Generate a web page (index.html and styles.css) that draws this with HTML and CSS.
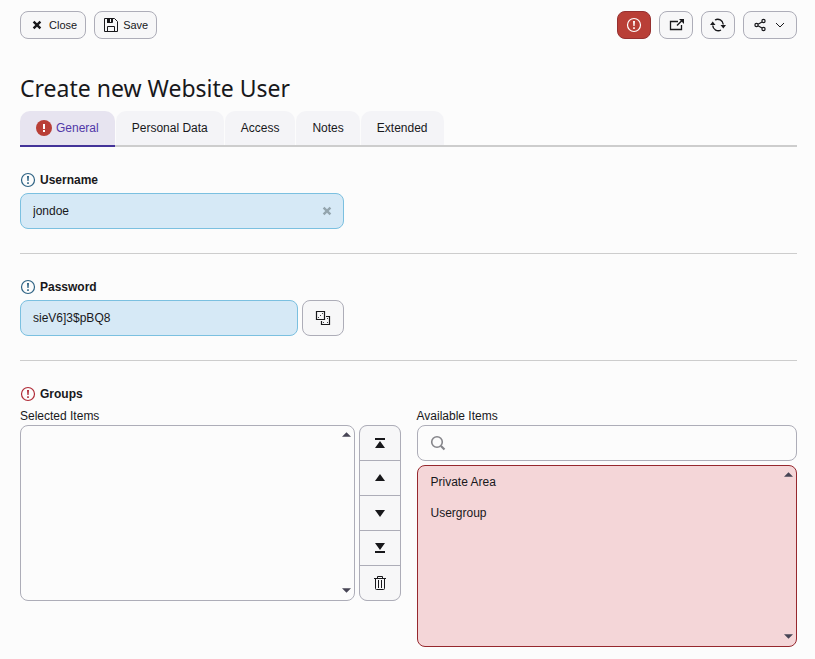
FILE: index.html
```html
<!DOCTYPE html>
<html lang="en">
<head>
<meta charset="utf-8">
<meta name="viewport" content="width=device-width, initial-scale=1">
<title>Create new Website User</title>
<link rel="stylesheet" href="styles.css">
</head>
<body>
<svg class="sprite" aria-hidden="true">
  <symbol id="alert" viewBox="0 0 16 16"><circle cx="8" cy="8" r="6.5" fill="none" stroke="currentColor" stroke-width="1.2"/><path d="M7 4h2l-.4 5H7.4zM7.2 10.3h1.6v1.6H7.2z" fill="currentColor"/></symbol>
  <symbol id="cross" viewBox="0 0 16 16"><path d="M4.600 4.600l6.800 6.800M11.400 4.600l-6.800 6.800" stroke="currentColor" stroke-width="2.400"/></symbol>
  <symbol id="up" viewBox="0 0 10 5"><path d="M5 0l5 5H0z" fill="currentColor"/></symbol>
  <symbol id="down" viewBox="0 0 10 5"><path d="M0 0h10L5 5z" fill="currentColor"/></symbol>
</svg>
<header class="toolbar">
  <button class="btn" type="button"><svg class="icon"><use href="#cross"/></svg>Close</button>
  <button class="btn" type="button"><svg class="icon" viewBox="0 0 16 16"><path d="M1.500 1.500h10l3 3v10h-13z" fill="none" stroke="currentColor"/><path d="M4.500 1.500v4h5v-4M4.500 14.500v-5h7v5" fill="none" stroke="currentColor"/><path d="M4 1h3v5H4zM8 2h1v3H8z" fill="currentColor"/></svg>Save</button>
  <div class="toolbar-end">
    <button class="btn btn-danger" type="button" aria-label="Show errors"><svg class="icon"><use href="#alert"/></svg></button>
    <button class="btn" type="button" aria-label="Open in new window"><svg class="icon" viewBox="0 0 16 16"><path d="M10 4.500H2.500v8h11V8" fill="none" stroke="currentColor" stroke-width="1.300"/><path d="M9 8.500l5-5" stroke="currentColor" stroke-width="1.500"/><path d="M11 2h5v5z" fill="currentColor"/></svg></button>
    <button class="btn" type="button" aria-label="Refresh"><svg class="icon" viewBox="0 0 16 16"><path d="M5 3a5.600 5.600 0 0 1 8.300 4.500M11 13a5.600 5.600 0 0 1-8.300-4.500" fill="none" stroke="currentColor" stroke-width="1.400"/><path d="M10.500 8H16l-2.700 3.500zM0 8h5.500L2.700 4.500z" fill="currentColor"/></svg></button>
    <button class="btn" type="button" aria-label="Share"><svg class="icon" viewBox="0 0 16 16"><g fill="none" stroke="currentColor" stroke-width="1.200"><circle cx="4.500" cy="8" r="1.600"/><circle cx="11.500" cy="4" r="1.600"/><circle cx="11.500" cy="12" r="1.600"/><path d="M6 7.200l4-2.300M6 8.800l4 2.300"/></g></svg><svg class="icon" viewBox="0 0 16 16"><path d="M4 6l4 4 4-4" fill="none" stroke="currentColor"/></svg></button>
  </div>
</header>
<main>
  <h1>Create new Website User</h1>
  <div class="tabs" role="tablist">
    <button class="tab tab-active" role="tab" aria-selected="true" type="button"><svg class="icon" viewBox="0 0 16 16"><circle cx="8" cy="8" r="8" fill="#b93f37"/><path d="M7 4h2v5H7zM7 10h2v2H7z" fill="#fff"/></svg>General</button>
    <button class="tab" role="tab" aria-selected="false" type="button">Personal Data</button>
    <button class="tab" role="tab" aria-selected="false" type="button">Access</button>
    <button class="tab" role="tab" aria-selected="false" type="button">Notes</button>
    <button class="tab" role="tab" aria-selected="false" type="button">Extended</button>
  </div>
  <form>
    <section class="field">
      <label class="label" for="username"><svg class="icon info"><use href="#alert"/></svg>Username</label>
      <div class="control">
        <input class="input filled" id="username" type="text" value="jondoe">
        <button class="clear" type="button" aria-label="Clear username"><svg class="icon"><use href="#cross"/></svg></button>
      </div>
    </section>
    <section class="field">
      <label class="label" for="password"><svg class="icon info"><use href="#alert"/></svg>Password</label>
      <div class="control">
        <input class="input filled" id="password" type="text" value="sieV6]3$pBQ8">
        <button class="btn btn-generate" type="button" aria-label="Generate password"><svg class="icon" viewBox="0 0 16 16"><path d="M1.500 1.500h8v8h-8zM11 6.500h3.500v8h-8V11" fill="none" stroke="currentColor" stroke-width="1.200"/><path d="M3 7h1v1H3zM5 5h1v1H5zM7 3h1v1H7zM12 8h1v1h-1zM8 12h1v1H8zM12 12h1v1h-1z" fill="currentColor" fill-opacity=".8"/></svg></button>
      </div>
    </section>
    <section class="field field-groups">
      <h2 class="label"><svg class="icon error"><use href="#alert"/></svg>Groups</h2>
      <div class="picker">
        <div class="column">
          <label class="caption" for="selected">Selected Items</label>
          <div class="row">
            <div class="list-wrap">
              <select class="list" id="selected" multiple></select>
              <svg class="arrow arrow-up"><use href="#up"/></svg><svg class="arrow arrow-down"><use href="#down"/></svg>
            </div>
            <div class="moves">
              <button type="button" aria-label="Move to top"><svg class="icon" viewBox="0 0 16 16"><path d="M3 3h10v2H3zM8 6l5 7H3z" fill="currentColor"/></svg></button>
              <button type="button" aria-label="Move up"><svg class="icon" viewBox="0 0 16 16"><path d="M8 4l5 7H3z" fill="currentColor"/></svg></button>
              <button type="button" aria-label="Move down"><svg class="icon" viewBox="0 0 16 16"><path d="M3 5h10l-5 7z" fill="currentColor"/></svg></button>
              <button type="button" aria-label="Move to bottom"><svg class="icon" viewBox="0 0 16 16"><path d="M3 11h10v2H3zM3 3h10l-5 7z" fill="currentColor"/></svg></button>
              <button type="button" aria-label="Remove"><svg class="icon" viewBox="0 0 16 16"><path d="M2 3.500h12M5.500 3V1.500h5V3M3.500 4v9.500q0 1 1 1h7q1 0 1-1V4M6.500 5v8M9.500 5v8" fill="none" stroke="currentColor"/></svg></button>
            </div>
          </div>
        </div>
        <div class="column">
          <label class="caption" for="available">Available Items</label>
          <div class="search">
            <svg class="icon" viewBox="0 0 16 16"><circle cx="7" cy="7" r="5.300" fill="none" stroke="currentColor" stroke-width="1.600"/><path d="M11 11l3.500 3.500" stroke="currentColor" stroke-width="2.200"/></svg>
            <input type="search" aria-label="Search available items">
          </div>
          <div class="list-wrap">
            <select class="list list-error" id="available" multiple><option>Private Area</option><option>Usergroup</option></select>
            <svg class="arrow arrow-up"><use href="#up"/></svg><svg class="arrow arrow-down"><use href="#down"/></svg>
          </div>
        </div>
      </div>
    </section>
  </form>
</main>
</body>
</html>
```
FILE: styles.css
```css
* { box-sizing: border-box; }
body {
  margin: 0;
  padding: 11px 18px 12px 20px;
  background: #fcfcfc;
  color: #18181b;
  font: 12px/16px "Liberation Sans", Arial, sans-serif;
}
button, input, select { font: inherit; color: inherit; margin: 0; }
.sprite { position: absolute; width: 0; height: 0; }
.icon { width: 16px; height: 16px; flex: none; display: block; }

.toolbar, .toolbar-end { display: flex; gap: 8px; }
.toolbar-end { margin-left: auto; }
.btn {
  display: flex;
  align-items: center;
  justify-content: center;
  gap: 4px;
  height: 28px;
  padding: 0 8px;
  border: 1px solid #adadb8;
  border-radius: 8px;
  background: #f7f7f8;
  font-size: 11px;
}
.btn-danger { background: #b93f37; border-color: #963030; color: #fff; }

h1 {
  margin: 32px 0 6px;
  font: 400 23px/34px "Noto Sans", "Open Sans", sans-serif;
}
.tabs { display: flex; gap: 1px; border-bottom: 2px solid #cdcdcd; }
.tab {
  display: flex;
  align-items: center;
  gap: 4px;
  height: 34px;
  padding: 0 16px;
  border: 0;
  border-radius: 10px 10px 0 0;
  background: #f4f4f7;
}
.tab-active {
  position: relative;
  background: #e7e4f0;
  color: #5137a8;
}
.tab-active::after {
  content: "";
  position: absolute;
  inset: auto 0 -2px;
  height: 2px;
  background: #443399;
}

.field { padding: 25px 0 24px; border-bottom: 1px solid #cdcdcd; }
.field-groups { border: 0; padding-bottom: 0; }
.label {
  display: flex;
  align-items: center;
  gap: 4px;
  margin: 0 0 5px;
  font-size: 12px;
  font-weight: 700;
}
.info { color: #2e6384; }
.error { color: #b02b37; }
.control { position: relative; display: flex; gap: 4px; max-width: 324px; }
.input {
  flex: 1;
  min-width: 0;
  height: 36px;
  padding: 0 12px;
  border: 1px solid #adadb8;
  border-radius: 8px;
}
.filled { background: #d6e9f6; border-color: #7bc0e0; }
.clear {
  position: absolute;
  top: 10px;
  right: 9px;
  padding: 0;
  border: 0;
  background: none;
  color: #94a5ae;
}
.btn-generate { width: 42px; height: 36px; }

.picker { display: grid; grid-template-columns: 1fr 1fr; gap: 16px; }
.caption { display: block; margin: 6px 0 1px; }
.field-groups .label { margin-bottom: 0; }
.row { display: flex; gap: 4px; }
.list-wrap { position: relative; flex: 1; }
.list {
  display: block;
  width: 100%;
  height: 176px;
  padding: 0;
  border: 1px solid #adadb8;
  border-radius: 8px;
  background: #fcfcfc;
  overflow: hidden;
}
.list-error { height: 182px; border-color: #96282e; background: #f4d6d8; }
.list option { min-height: 31px; padding: 9px 13px 7px; line-height: 15px; }
.arrow { position: absolute; right: 4px; width: 9px; height: 5px; color: #474555; }
.arrow-up { top: 7px; }
.arrow-down { bottom: 8px; }
.moves {
  display: grid;
  grid-auto-rows: 1fr;
  gap: 1px;
  width: 42px;
  border: 1px solid #adadb8;
  border-radius: 8px;
  background: #adadb8;
  overflow: hidden;
}
.moves button {
  display: flex;
  align-items: center;
  justify-content: center;
  padding: 0;
  border: 0;
  background: #f7f7f8;
}
.search {
  display: flex;
  align-items: center;
  gap: 8px;
  height: 36px;
  margin-bottom: 4px;
  padding: 0 12px;
  border: 1px solid #adadb8;
  border-radius: 8px;
}
.search .icon { color: #85858a; }
.search input { flex: 1; min-width: 0; border: 0; background: none; }
```
